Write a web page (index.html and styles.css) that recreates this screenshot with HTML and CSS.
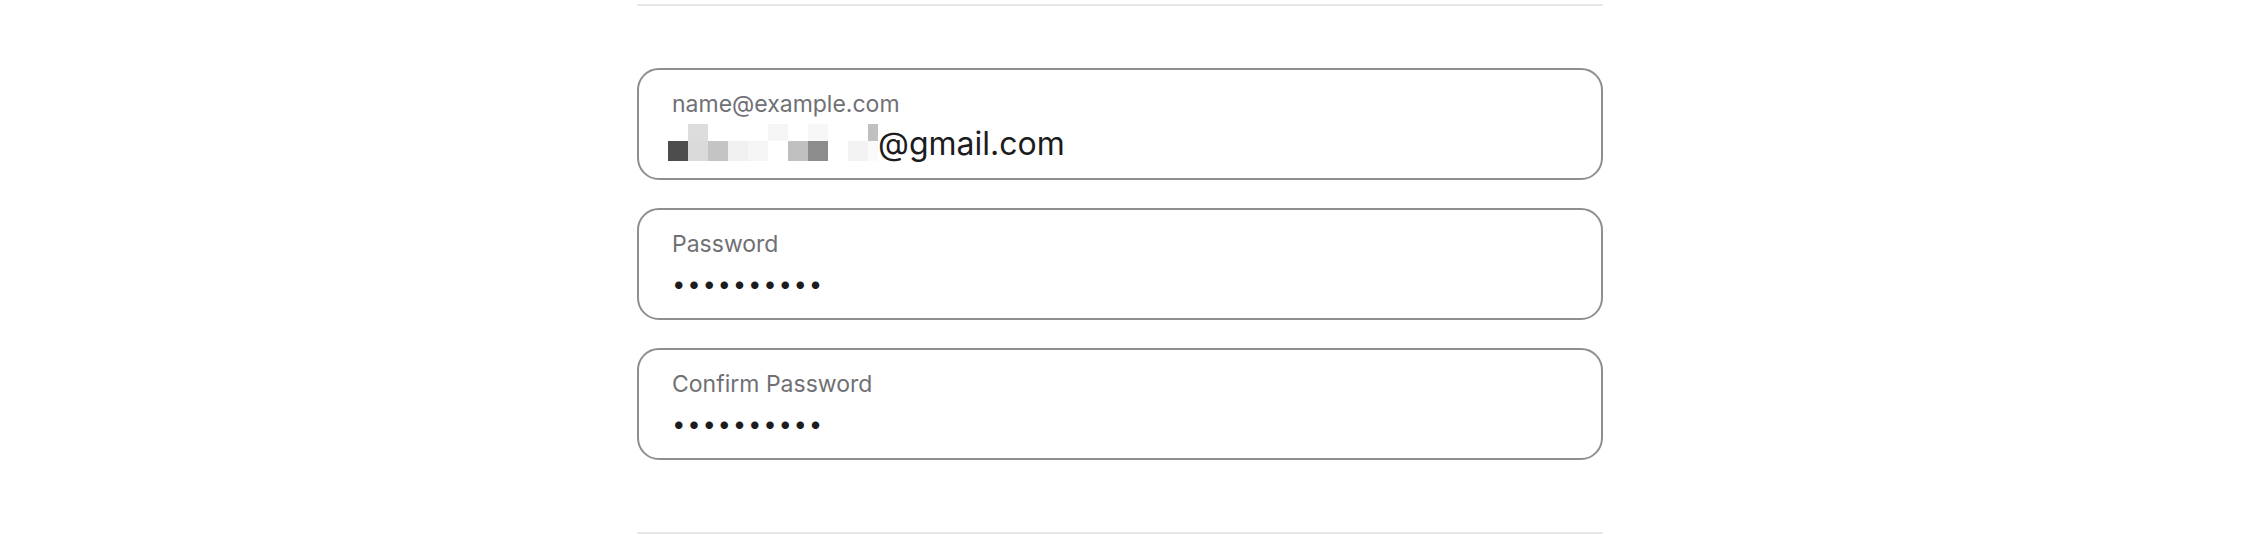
FILE: index.html
```html
<!DOCTYPE html>
<html lang="en">
<head>
<meta charset="utf-8">
<title>Sign up</title>
<link rel="stylesheet" href="styles.css">
</head>
<body>
<main class="page">
  <div class="divider"></div>
  <form class="form">
    <div class="field">
      <div class="label">name@example.com</div>
      <div class="value"><span class="mosaic" aria-hidden="true"><span class="mosaic-grid"><i></i><i class="s1"></i><i></i><i></i><i></i><i class="s2"></i><i></i><i class="s3"></i><i></i><i></i><i class="s4"></i><i class="s5"></i><i class="s6"></i><i class="s7"></i><i class="s8"></i><i class="s2"></i><i></i><i class="s4"></i><i class="s9"></i><i></i><i class="s10"></i><i class="s11"></i></span></span>@gmail.com</div>
    </div>
    <div class="field">
      <div class="label">Password</div>
      <div class="dots">••••••••••</div>
    </div>
    <div class="field">
      <div class="label">Confirm Password</div>
      <div class="dots">••••••••••</div>
    </div>
  </form>
  <div class="divider bottom"></div>
</main>
</body>
</html>
```
FILE: styles.css
```css
html, body {
  margin: 0;
  padding: 0;
  background: #ffffff;
}
body {
  font-family: Inter, "Noto Sans", "Liberation Sans", sans-serif;
  color: #1c1c1e;
}
.page {
  width: 966px;
  margin-left: 637px;
  padding-top: 4px;
}
.divider {
  height: 2px;
  background: #e6e6ea;
}
.form {
  display: flex;
  flex-direction: column;
  gap: 28px;
  padding-top: 62px;
  padding-bottom: 72px;
}
.field {
  box-sizing: border-box;
  height: 112px;
  border: 2px solid #8e8e93;
  border-radius: 22px;
  padding: 19.5px 33px 0;
}
.label {
  font-size: 23px;
  line-height: 28px;
  color: #707074;
}
.value {
  margin-top: 6px;
  font-size: 32px;
  line-height: 38px;
  color: #1c1c1e;
  white-space: nowrap;
}
.mosaic {
  display: inline-block;
  overflow: hidden;
  margin-left: -4px;
  vertical-align: -6.5px;
}
.mosaic-grid {
  display: grid;
  grid-template-columns: repeat(10, 20px) 10px;
  grid-template-rows: 17px 20px;
}
.mosaic i { background: #ffffff; }
.mosaic .s1 { background: #dcdcdc; }
.mosaic .s2 { background: #f5f5f5; }
.mosaic .s3 { background: #f7f7f7; }
.mosaic .s4 { background: #c0c0c0; }
.mosaic .s5 { background: #4d4d4d; }
.mosaic .s6 { background: #dadada; }
.mosaic .s7 { background: #c4c4c4; }
.mosaic .s8 { background: #f0f0f0; }
.mosaic .s9 { background: #8c8c8c; }
.mosaic .s10 { background: #f3f3f3; }
.mosaic .s11 { background: #fafafa; }
.dots {
  margin-top: 11.5px;
  font-size: 24px;
  line-height: 29px;
  letter-spacing: 1.7px;
  color: #1c1c1e;
}
```
